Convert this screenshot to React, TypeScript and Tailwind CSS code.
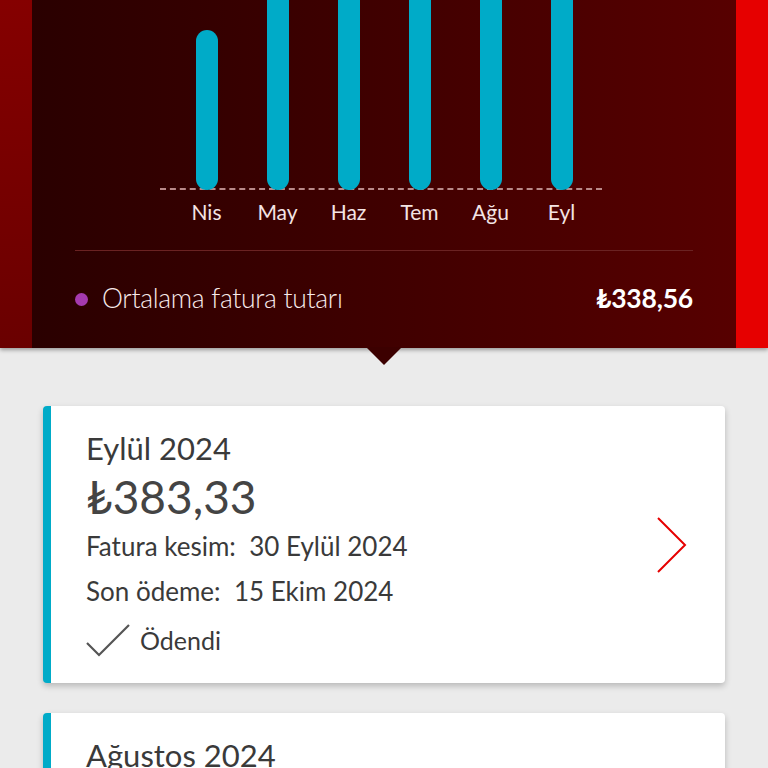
const months = [
  { label: 'Nis', top: 30 },
  { label: 'May', top: 0 },
  { label: 'Haz', top: 0 },
  { label: 'Tem', top: 0 },
  { label: 'Ağu', top: 0 },
  { label: 'Eyl', top: 0 },
];

function Chart() {
  return (
    <div className="flex flex-col items-center pr-[6px]">
      <div className="relative w-[442px] h-[190px] border-b-2 border-dashed border-[#b98a8a]">
        <div className="flex h-full pl-[11px] pr-[5px]">
          {months.map((m) => (
            <div key={m.label} className="flex-1 flex justify-center items-end">
              <div
                className="w-[22px] bg-[#00abc8] rounded-t-full rounded-b-full -mb-[2px]"
                style={{ height: 190 - m.top + (m.top === 0 ? 12 : 0) }}
              />
            </div>
          ))}
        </div>
      </div>
      <div className="flex w-[442px] pl-[11px] pr-[5px] mt-[8px]">
        {months.map((m) => (
          <div key={m.label} className="flex-1 text-center text-[21px] leading-[28px] text-[#f3e4e4]">
            {m.label}
          </div>
        ))}
      </div>
    </div>
  );
}

function BillCard() {
  return (
    <div className="bg-white rounded-[4px] border-l-[8px] border-[#00abc8] shadow-[0_3px_6px_rgba(0,0,0,0.22)] h-[277px] pl-[35px] pr-[37px] flex items-start">
      <div className="flex-1 text-[#3a3a3a] pt-[25px]">
        <div className="text-[31px] leading-[34px]">Eylül 2024</div>
        <div className="text-[46px] leading-[50px] mt-[7px] text-[#444]">₺383,33</div>
        <div className="text-[26px] leading-[34px] mt-[7px]">Fatura kesim:&nbsp; 30 Eylül 2024</div>
        <div className="text-[26px] leading-[34px] mt-[11px]">Son ödeme:&nbsp; 15 Ekim 2024</div>
        <div className="flex items-center gap-[10px] mt-[15px]">
          <svg width="44" height="34" viewBox="0 0 44 34" fill="none">
            <path d="M1 20 L13 32 L43 2" stroke="#555" strokeWidth="2.2" />
          </svg>
          <span className="text-[25px] leading-[34px]">Ödendi</span>
        </div>
      </div>
      <svg className="self-center" width="32" height="58" viewBox="0 0 32 58" fill="none">
        <path d="M2 2 L29 29 L2 56" stroke="#e60000" strokeWidth="2" />
      </svg>
    </div>
  );
}

export default function App() {
  return (
    <div className="w-[768px] h-[768px] overflow-hidden bg-[#ebebeb]" style={{ fontFamily: 'Lato, "Open Sans", sans-serif' }}>
      <div className="relative flex h-[348px] shadow-[0_2px_4px_rgba(0,0,0,0.35)]">
        <div className="w-[32px] bg-gradient-to-b from-[#850000] to-[#6a0000]" />
        <div className="flex-1 bg-gradient-to-r from-[#2a0000] to-[#570000] flex flex-col">
          <Chart />
          <div className="mx-[43px] mt-[24px] border-t border-[#6a2222]" />
          <div className="mx-[43px] flex items-center h-[96px]">
            <span className="w-[13px] h-[13px] rounded-full bg-[#a53aae] mr-[14px]" />
            <span className="flex-1 text-[26.5px] text-[#f7eaea] font-light tracking-[-0.3px]">Ortalama fatura tutarı</span>
            <span className="text-[26.5px] font-bold text-white tracking-[-0.2px]">₺338,56</span>
          </div>
        </div>
        <div className="w-[32px] bg-[#e60000]" />
        <div className="absolute left-[366px] top-[347px] w-0 h-0 border-l-[18px] border-r-[18px] border-t-[18px] border-l-transparent border-r-transparent border-t-[#3c0000]" />
      </div>
      <div className="px-[43px] pt-[58px] flex flex-col gap-[30px]">
        <BillCard />
        <div className="bg-white rounded-[4px] border-l-[8px] border-[#00abc8] shadow-[0_3px_6px_rgba(0,0,0,0.22)] h-[120px] pl-[35px] pt-[25px]">
          <div className="text-[31px] leading-[34px] text-[#3a3a3a]">Ağustos 2024</div>
        </div>
      </div>
    </div>
  );
}
